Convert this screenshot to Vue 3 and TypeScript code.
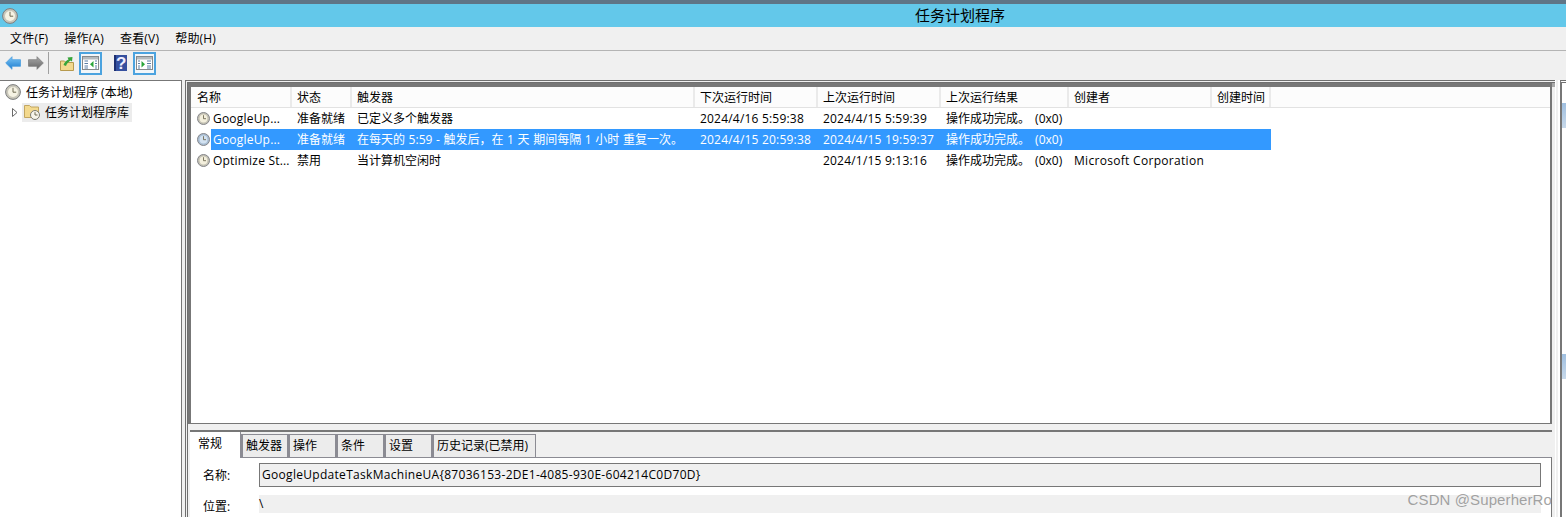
<script setup lang="ts">
interface Task {
  name: string
  status: string
  trigger: string
  next: string
  last: string
  result: string
  author: string
  selected?: boolean
}

const menus = ['文件(F)', '操作(A)', '查看(V)', '帮助(H)']

const columns = [
  { label: '名称', width: 101 },
  { label: '状态', width: 60 },
  { label: '触发器', width: 343 },
  { label: '下次运行时间', width: 123 },
  { label: '上次运行时间', width: 123 },
  { label: '上次运行结果', width: 128 },
  { label: '创建者', width: 143 },
  { label: '创建时间', width: 59 },
]

const tasks: Task[] = [
  {
    name: 'GoogleUp...',
    status: '准备就绪',
    trigger: '已定义多个触发器',
    next: '2024/4/16 5:59:38',
    last: '2024/4/15 5:59:39',
    result: '操作成功完成。 (0x0)',
    author: '',
  },
  {
    name: 'GoogleUp...',
    status: '准备就绪',
    trigger: '在每天的 5:59 - 触发后，在 1 天 期间每隔 1 小时 重复一次。',
    next: '2024/4/15 20:59:38',
    last: '2024/4/15 19:59:37',
    result: '操作成功完成。 (0x0)',
    author: '',
    selected: true,
  },
  {
    name: 'Optimize St...',
    status: '禁用',
    trigger: '当计算机空闲时',
    next: '',
    last: '2024/1/15 9:13:16',
    result: '操作成功完成。 (0x0)',
    author: 'Microsoft Corporation',
  },
]

const tabs = [
  { label: '触发器', width: 47 },
  { label: '操作', width: 48 },
  { label: '条件', width: 48 },
  { label: '设置', width: 48 },
  { label: '历史记录(已禁用)', width: 104 },
]
</script>

<template>
  <div class="window">
    <div class="title-bar">
      <svg width="16" height="16" viewBox="0 0 16 16">
        <circle cx="8" cy="8" r="7.400" fill="#c9c7ba" stroke="#7c7d7e" stroke-width="1" />
        <circle cx="8" cy="8" r="5" fill="#f6f3e4" />
        <path d="M8 3.800V8.200H11.200" fill="none" stroke="#6f6a52" stroke-width="1" />
      </svg>
      <span class="title-text">任务计划程序</span>
    </div>

    <div class="menu-bar">
      <span v-for="m in menus" :key="m" class="menu-item">{{ m }}</span>
    </div>

    <div class="toolbar">
      <svg class="arrow-back" width="16" height="14" viewBox="0 0 16 14">
        <defs>
          <linearGradient id="blueArrow" x1="0" y1="0" x2="0" y2="1">
            <stop offset="0" stop-color="#7cc6f6" />
            <stop offset="1" stop-color="#1c7ccf" />
          </linearGradient>
          <linearGradient id="grayArrow" x1="0" y1="0" x2="0" y2="1">
            <stop offset="0" stop-color="#a9a9a9" />
            <stop offset="1" stop-color="#666" />
          </linearGradient>
        </defs>
        <path d="M7 .7V3.700H15.500V10.300H7V13.300L.7 7Z" fill="url(#blueArrow)" stroke="#4d9fdf" stroke-width="0.8" />
      </svg>
      <svg class="arrow-forward" width="16" height="14" viewBox="0 0 16 14">
        <path d="M9 .7V3.700H.5V10.300H9V13.300L15.300 7Z" fill="url(#grayArrow)" stroke="#808080" stroke-width="0.8" />
      </svg>
      <span class="tool-sep"></span>
      <svg class="up" width="14" height="15" viewBox="0 0 14 15">
        <path d="M.5 5H4.500L6 6.500H13.500V14.500H.5Z" fill="#f3d98e" stroke="#b79a4e" />
        <path d="M3.500 9C4.500 6 6.500 4.200 8.500 3.500L7.500 1.500L12.500 1L12 5.500L10.500 4.500C9 5.500 6.500 7.500 6 10Z" fill="#37a53a" />
      </svg>
      <span class="tool-box">
        <svg width="17" height="14" viewBox="0 0 17 14">
          <rect x=".5" y=".5" width="16" height="13" fill="#fff" stroke="#85898c" />
          <rect x="1" y="1" width="15" height="2.500" fill="#b5babd" />
          <path d="M2.500 5H6M2.500 7.500H6M2.500 10H6M2.500 12H6M13 5H15M13 7.500H15M13 10H15M13 12H15" stroke="#5b7ea6" />
          <path d="M11.500 5V11.500L8 8.250Z" fill="#2aa63a" />
        </svg>
      </span>
      <svg class="help" width="13" height="16" viewBox="0 0 13 16">
        <rect width="13" height="16" fill="#35509f" />
        <rect width="2" height="16" fill="#1d2f70" />
        <text x="7.300" y="13.500" class="help-mark">?</text>
      </svg>
      <span class="tool-box">
        <svg width="17" height="14" viewBox="0 0 17 14">
          <rect x=".5" y=".5" width="16" height="13" fill="#fff" stroke="#85898c" />
          <rect x="1" y="1" width="15" height="2.500" fill="#b5babd" />
          <path d="M2 5H4M2 7.500H4M2 10H4M2 12H4M11 5H15M11 7.500H15M11 10H15M11 12H15" stroke="#5b7ea6" />
          <path d="M5.500 5V11.500L9 8.250Z" fill="#2aa63a" />
        </svg>
      </span>
    </div>

    <div class="main">
      <aside class="tree">
        <div class="tree-row root">
          <svg width="16" height="16" viewBox="0 0 16 16">
            <circle cx="8" cy="8" r="7.400" fill="#c9c7ba" stroke="#7c7d7e" stroke-width="1" />
            <circle cx="8" cy="8" r="5" fill="#f6f3e4" />
            <path d="M8 3.800V8.200H11.200" fill="none" stroke="#6f6a52" stroke-width="1" />
          </svg>
          <span>任务计划程序 (本地)</span>
        </div>
        <div class="tree-row child">
          <svg class="expander" width="6" height="9" viewBox="0 0 6 9">
            <path d="M.5 .5L5 4.500L.5 8.500Z" fill="#fff" stroke="#6a6a6a" />
          </svg>
          <span class="tree-sel">
            <svg width="16" height="16" viewBox="0 0 16 16">
              <path d="M.5 1.500H5.500L7 3H14.500V13.500H.5Z" fill="#f3d98e" stroke="#c2a661" />
              <circle cx="11" cy="11" r="4.500" fill="#f6f4ea" stroke="#7a7a72" />
              <path d="M11 8.200V11H13.500" fill="none" stroke="#6f6a52" />
            </svg>
            <span>任务计划程序库</span>
          </span>
        </div>
      </aside>

      <section class="center">
        <div class="list">
          <div class="list-head">
            <span
              v-for="c in columns"
              :key="c.label"
              class="head-cell"
              :style="{ width: c.width + 'px' }"
            >{{ c.label }}</span>
          </div>
          <div
            v-for="(t, i) in tasks"
            :key="i"
            class="row"
            :class="{ selected: t.selected }"
          >
            <span class="cell name-cell" :style="{ width: columns[0].width + 'px' }">
              <svg class="row-clock" width="13" height="13" viewBox="0 0 13 13">
                <circle class="rim" cx="6.500" cy="6.500" r="6" fill="#c4c2b4" stroke="#85868a" stroke-width="1" />
                <circle class="face" cx="6.500" cy="6.500" r="3.900" fill="#f3efdd" />
                <path d="M6.500 3.200V6.700H9" fill="none" stroke="#6f6a52" stroke-width="0.9" />
              </svg>
              <span class="name-text latin">{{ t.name }}</span>
            </span>
            <span class="cell" :style="{ width: columns[1].width + 'px' }">{{ t.status }}</span>
            <span class="cell trigger" :style="{ width: columns[2].width + 'px' }">{{ t.trigger }}</span>
            <span class="cell latin" :style="{ width: columns[3].width + 'px' }">{{ t.next }}</span>
            <span class="cell latin" :style="{ width: columns[4].width + 'px' }">{{ t.last }}</span>
            <span class="cell result" :style="{ width: columns[5].width + 'px' }">{{ t.result }}</span>
            <span class="cell author" :style="{ width: columns[6].width + 'px' }">{{ t.author }}</span>
            <span class="cell" :style="{ width: columns[7].width + 'px' }"></span>
          </div>
        </div>

        <div class="detail">
          <div class="tab-strip">
            <span class="tab active">常规</span>
            <span
              v-for="t in tabs"
              :key="t.label"
              class="tab"
              :style="{ width: t.width + 'px' }"
            >{{ t.label }}</span>
          </div>
          <div class="tab-body">
            <div class="field">
              <label>名称:</label>
              <div class="input">GoogleUpdateTaskMachineUA{87036153-2DE1-4085-930E-604214C0D70D}</div>
            </div>
            <div class="field location">
              <label>位置:</label>
              <div class="input plain">\</div>
            </div>
          </div>
        </div>
      </section>

      <aside class="actions">
        <div class="actions-head"></div>
        <div class="actions-head second"></div>
      </aside>
    </div>

    <span class="watermark">CSDN @SuperherRo</span>
  </div>
</template>

<style scoped>
.window {
  position: relative;
  display: flex;
  flex-direction: column;
  box-sizing: border-box;
  width: 1566px;
  height: 517px;
  overflow: hidden;
  background: #f0f0f0;
  color: #000;
  font-family: "Open Sans", "Noto Sans CJK SC", sans-serif;
  font-size: 12px;
  border-top: 4px solid #5f7586;
}

.latin {
  letter-spacing: 0.2px;
}

.title-bar {
  position: relative;
  display: flex;
  flex: none;
  align-items: center;
  height: 23px;
  padding-left: 2px;
  background: #63c8ea;
}

.title-text {
  position: absolute;
  left: 915px;
  top: 1px;
  font-size: 15px;
  line-height: 20px;
}

.menu-bar {
  display: flex;
  flex: none;
  align-items: center;
  gap: 16px;
  box-sizing: border-box;
  height: 24px;
  padding-left: 10px;
  border-bottom: 1px solid #b4b4b4;
}

.menu-item {
  line-height: 18px;
  letter-spacing: 0.2px;
}

.toolbar {
  display: flex;
  flex: none;
  align-items: center;
  box-sizing: border-box;
  height: 28px;
  padding: 0 0 4px 5px;
}

.arrow-back {
  margin-right: 7px;
}

.tool-sep {
  width: 1px;
  height: 22px;
  margin: 0 11px 0 4px;
  background: #a0a0a0;
}

.up {
  margin-right: 5px;
}

.tool-box {
  display: flex;
  align-items: center;
  justify-content: center;
  box-sizing: border-box;
  width: 23px;
  height: 23px;
  background: #f2f6f9;
  border: 2px solid #4ba3df;
}

.help {
  margin: 0 6px 0 12px;
}

.help-mark {
  fill: #eef;
  font-family: "Liberation Sans", sans-serif;
  font-size: 17px;
  font-weight: 700;
  text-anchor: middle;
}

.main {
  display: flex;
  flex: 1;
  min-height: 0;
  margin-top: 1px;
}

.tree {
  flex: none;
  box-sizing: border-box;
  width: 182px;
  padding: 1px 0 0 5px;
  background: #fff;
  border-top: 1px solid #777;
  border-right: 1px solid #777;
}

.tree-row {
  display: flex;
  align-items: center;
  height: 20px;
}

.root svg {
  margin-right: 5px;
}

.child {
  padding-left: 7px;
}

.expander {
  margin-right: 4px;
}

.tree-sel {
  display: flex;
  align-items: center;
  gap: 5px;
  height: 19px;
  padding: 0 3px 0 2px;
  background: #ececec;
}

.center {
  display: flex;
  flex: none;
  flex-direction: column;
  box-sizing: border-box;
  width: 1371px;
  margin-left: 3px;
  padding-right: 4px;
  border-top: 3px double #6f6f6f;
  border-left: 3px double #6f6f6f;
  background: linear-gradient(#a9a9a9, #a9a9a9) no-repeat left top / 100% 4px, #f0f0f0;
}

.list {
  flex: none;
  box-sizing: border-box;
  height: 341px;
  background: #fff;
  border: 1px solid #777;
  border-width: 4px 2px 1px 3px;
}

.list-head {
  display: flex;
  box-sizing: border-box;
  height: 21px;
  background: #fcfcfc;
  border-bottom: 1px solid #e2e2e2;
}

.head-cell {
  flex: none;
  box-sizing: border-box;
  padding-left: 5px;
  line-height: 22px;
  border-right: 2px solid #eaeaea;
}

.head-cell:first-child {
  padding-left: 6px;
}

.row {
  display: flex;
  width: max-content;
  height: 21px;
  line-height: 21px;
}

.cell {
  flex: none;
  box-sizing: border-box;
  padding-left: 5px;
  white-space: nowrap;
  overflow: hidden;
}

.trigger {
  word-spacing: 0.500px;
}

.result {
  word-spacing: 2px;
}

.author {
  letter-spacing: 0.3px;
}

.name-cell {
  display: flex;
  align-items: center;
  padding-left: 6px;
}

.row-clock {
  flex: none;
  margin-right: 3px;
}

.name-text {
  overflow: hidden;
}

.row.selected .cell {
  background: #3399ff;
  color: #fff;
}

.row.selected .name-cell {
  background: linear-gradient(90deg, #fff 20px, #3399ff 20px);
}

.row.selected .rim {
  fill: #a9bed3;
}

.row.selected .face {
  fill: #d3e2f1;
}

.detail {
  display: flex;
  flex: 1;
  flex-direction: column;
  min-height: 0;
  margin: 6px 0 0 2px;
  background: #f0f0f0;
  border-top: 2px solid #777;
}

.tab-strip {
  display: flex;
  flex: none;
  align-items: flex-end;
  height: 25px;
}

.tab {
  box-sizing: border-box;
  height: 23px;
  padding-left: 3px;
  line-height: 22px;
  background: #ececec;
  border: 1px solid #8b8b93;
  border-left-width: 2px;
  border-bottom: none;
}

.tab.active {
  position: relative;
  z-index: 1;
  width: 51px;
  height: 26px;
  margin-bottom: -1px;
  padding-left: 8px;
  line-height: 23px;
  background: #fff;
  border: none;
  border-right: 1px solid #8b8b93;
}

.tab-body {
  flex: 1;
  padding: 5px 10px 0 13px;
  background: #fff;
  border-top: 1px solid #8b8b93;
  border-right: 1px solid #777;
}

.field {
  display: flex;
  align-items: center;
  height: 24px;
}

.field label {
  flex: none;
  width: 56px;
}

.input {
  flex: 1;
  box-sizing: border-box;
  height: 24px;
  padding-left: 2px;
  line-height: 21px;
  letter-spacing: 0.3px;
  background: #f0f0f0;
  border: 1px solid #777;
}

.location {
  height: 18px;
  margin-top: 8px;
}

.location label {
  padding-top: 4px;
}

.input.plain {
  height: 18px;
  padding-left: 0;
  line-height: 18px;
  border: none;
}

.actions {
  flex: 1;
  margin-left: 4px;
  background: #fff;
  border-top: 3px double #6f6f6f;
  border-left: 2px solid #777;
  box-shadow: -2px 0 0 #fff, -4px 0 0 #f0f0f0, -5px 0 0 #fff;
}

.actions-head {
  height: 25px;
  margin-top: 20px;
  background: linear-gradient(180deg, #9fbfe0, #c8d9ea);
}

.actions-head.second {
  margin-top: 226px;
}

.watermark {
  position: absolute;
  right: 14px;
  top: 487px;
  color: rgba(140, 140, 140, 0.8);
  font-family: "Liberation Sans", sans-serif;
  font-size: 15px;
  line-height: 18px;
  letter-spacing: 0.1px;
}
</style>
